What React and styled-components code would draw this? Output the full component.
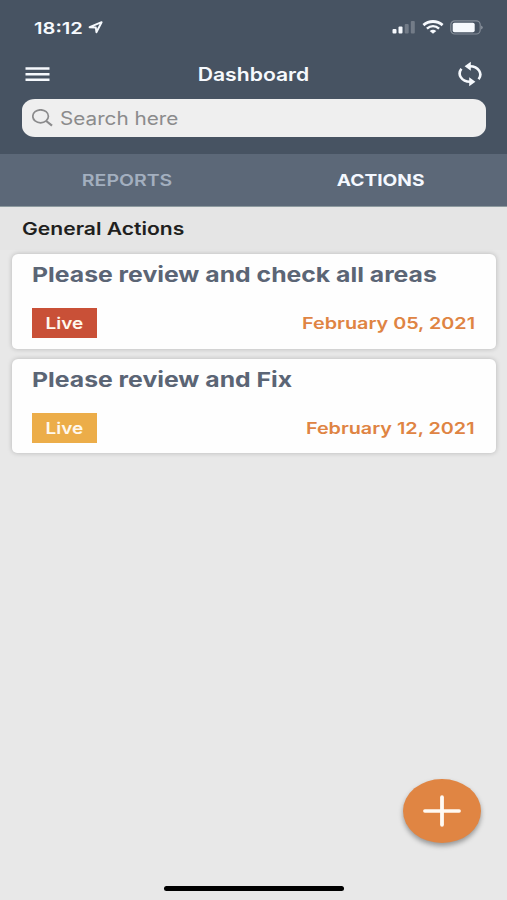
import React, { useState } from "react";
import styled, { createGlobalStyle } from "styled-components";

const GlobalStyle = createGlobalStyle`
  * {
    box-sizing: border-box;
  }
  body {
    margin: 0;
    background: #e8e8e8;
    font-family: Inter, "Liberation Sans", sans-serif;
  }
`;

const Screen = styled.div`
  display: flex;
  flex-direction: column;
  height: 900px;
  overflow: hidden;
  background: #e8e8e8;
  position: relative;
`;

const Header = styled.header`
  height: 154px;
  background: #475362;
  color: #f6f9fd;
`;

const StatusBar = styled.div`
  height: 54px;
  padding: 0 23px 0 34px;
  display: flex;
  align-items: center;
  justify-content: space-between;
`;

const StatusGroup = styled.div`
  display: flex;
  align-items: center;
  gap: ${(props) => props.$gap || "0"};
`;

// the whole interface uses wide letters
const Label = styled.span`
  display: inline-block;
  white-space: pre;
  line-height: 24px;
  transform: scaleX(${(props) => props.$wide || 1.22});
  transform-origin: ${(props) => props.$from || "left"} center;
`;

const Clock = styled(Label)`
  width: 54px;
  padding-top: 1px;
  font-size: 16.5px;
  font-weight: 600;
`;

const NavBar = styled.div`
  height: 40px;
  padding: 0 24px 0 25px;
  display: flex;
  align-items: center;
  justify-content: space-between;
`;

const IconButton = styled.button`
  display: flex;
  padding: 0;
  border: 0;
  background: none;
  color: inherit;
  cursor: pointer;
`;

const Title = styled(Label)`
  padding-top: 2px;
  font-size: 18px;
  font-weight: 600;
`;

const SearchBox = styled.div`
  height: 38px;
  margin: 5px 21px 0 22px;
  padding: 0 10px;
  display: flex;
  align-items: center;
  border-radius: 13px / 11px;
  background: #efefef;
  color: #8b8b8c;
`;

const Placeholder = styled(Label)`
  margin-left: 6px;
  padding-top: 2px;
  font-size: 18px;
`;

const Tabs = styled.nav`
  display: flex;
  height: 53px;
  background: #5c6878;
  border-bottom: 1px solid #8d9a9f;
`;

const Tab = styled.button`
  flex: 1;
  padding: 0;
  border: 0;
  background: none;
  font-family: inherit;
  font-size: 16px;
  font-weight: ${(props) => (props.$active ? 700 : 600)};
  color: ${(props) => (props.$active ? "#f4f8ff" : "#a3afbf")};
  cursor: pointer;
`;

const SectionTitle = styled.div`
  height: 43px;
  padding: 10px 22px 0;
  background: #e5e5e5;
  color: #1f1f20;
  font-size: 17.5px;
  font-weight: 600;
`;

const List = styled.main`
  display: flex;
  flex-direction: column;
  gap: 10px;
  padding: 4px 11px 0 12px;
`;

const Card = styled.article`
  height: 94.5px;
  padding: 9px 20px 0;
  border-radius: 6px 6px 5px 5px;
  background: #fefefe;
  box-shadow: 0 0 5px rgba(0, 0, 0, 0.22);
`;

const CardTitle = styled(Label)`
  display: block;
  width: max-content;
  font-size: 20.5px;
  font-weight: 700;
  color: #5b6575;
`;

const CardFooter = styled.div`
  display: flex;
  align-items: center;
  justify-content: space-between;
  margin-top: 21px;
`;

const Badge = styled.span`
  display: flex;
  align-items: center;
  justify-content: center;
  width: 65px;
  height: 30px;
  background: ${(props) => props.$color};
  color: #fff8ee;
  font-size: 16.5px;
  font-weight: 600;
`;

const DateText = styled(Label)`
  margin-right: 1px;
  font-size: 16px;
  font-weight: 600;
  color: #df8443;
`;

const AddButton = styled.button`
  position: absolute;
  right: 26px;
  bottom: 57.5px;
  width: 78px;
  height: 64px;
  padding: 0;
  border: 0;
  border-radius: 50%;
  display: flex;
  align-items: center;
  justify-content: center;
  background: #e08543;
  box-shadow: 0 3px 5px rgba(0, 0, 0, 0.35);
  cursor: pointer;
`;

const HomeIndicator = styled.div`
  width: 180px;
  height: 5px;
  margin: auto auto 9px 164px;
  border-radius: 3px;
  background: #000;
`;

const LocationIcon = () => (
  <svg width="16" height="13" viewBox="0 0 16 13" fill="none">
    <path
      d="M1.6 6.2L13.6 1.2L8.4 11.2L7.8 6.5Z"
      stroke="currentColor"
      strokeWidth="1.9"
      strokeLinejoin="round"
    />
  </svg>
);

const SignalIcon = () => (
  <svg width="24" height="14" viewBox="0 0 24 14" fill="currentColor">
    <rect x="0.5" y="9" width="4" height="4.5" rx="1" />
    <rect x="6.5" y="6.5" width="4" height="7" rx="1" />
    <rect x="12.7" y="4" width="4" height="9.5" rx="1" opacity="0.25" />
    <rect x="18.8" y="1" width="4" height="12.5" rx="1" opacity="0.25" />
  </svg>
);

const WifiIcon = () => (
  <svg width="22" height="14" viewBox="0 0 22 14" fill="none">
    <path d="M1.4 5.1C7 0.3 15 0.3 20.6 5.1" stroke="currentColor" strokeWidth="2.8" />
    <path d="M4.9 8.6C8.5 5.6 13.5 5.6 17.1 8.6" stroke="currentColor" strokeWidth="2.5" />
    <path d="M7.7 11Q11 8.6 14.3 11L11 13.8Z" fill="currentColor" />
  </svg>
);

const BatteryIcon = () => (
  <svg width="34" height="15" viewBox="0 0 34 15">
    <rect
      x="0.8"
      y="0.8"
      width="29.4"
      height="13.2"
      rx="4"
      fill="none"
      stroke="currentColor"
      strokeOpacity="0.35"
      strokeWidth="1.2"
    />
    <rect x="2.7" y="2.8" width="22" height="9.4" rx="1.8" fill="currentColor" />
    <path d="M31.3 5.5Q34 7.4 31.3 9.4Z" fill="currentColor" opacity="0.5" />
  </svg>
);

const MenuIcon = () => (
  <svg width="25" height="14" viewBox="0 0 25 14" stroke="currentColor" strokeWidth="2.4">
    <path d="M0.5 1.5H24.5M0.5 7.2H24.5M0.5 12.8H24.5" />
  </svg>
);

const SyncIcon = () => (
  <svg width="26" height="26" viewBox="0 0 26 26" fill="none">
    <path
      d="M4.4 7.8C0 13.4 4.6 20.8 13 20.8M21.6 18.2C26 12.6 21.4 5.2 13 5.2"
      stroke="currentColor"
      strokeWidth="2.6"
    />
    <path d="M7.6 5.2L13.8 0.7V9.7ZM18.4 20.8L12.2 16.3V25.3Z" fill="currentColor" />
  </svg>
);

const SearchIcon = () => (
  <svg width="22" height="18" viewBox="0 0 22 18" fill="none" stroke="currentColor">
    <ellipse cx="8.6" cy="7.3" rx="7.8" ry="6.5" strokeWidth="1.7" />
    <path d="M14.2 12L20 16.6" strokeWidth="2.2" />
  </svg>
);

const PlusIcon = () => (
  <svg width="38" height="32" viewBox="0 0 38 32" stroke="#fffaf4" strokeLinecap="round">
    <path d="M1.8 16H36.2" strokeWidth="3.4" />
    <path d="M19 2.2V29.8" strokeWidth="3.8" />
  </svg>
);

const actions = [
  {
    title: "Please review and check all areas",
    date: "February 05, 2021",
    color: "#c95037",
  },
  {
    title: "Please review and Fix",
    date: "February 12, 2021",
    color: "#ecad49",
  },
];

function App() {
  const [tab, setTab] = useState("ACTIONS");

  return (
    <>
      <GlobalStyle />
      <Screen>
        <Header>
          <StatusBar>
            <StatusGroup>
              <Clock>18:12</Clock>
              <LocationIcon />
            </StatusGroup>
            <StatusGroup $gap="6px">
              <SignalIcon />
              <WifiIcon />
              <BatteryIcon />
            </StatusGroup>
          </StatusBar>
          <NavBar>
            <IconButton>
              <MenuIcon />
            </IconButton>
            <Title $from="center" $wide={1.175}>
              Dashboard
            </Title>
            <IconButton>
              <SyncIcon />
            </IconButton>
          </NavBar>
          <SearchBox>
            <SearchIcon />
            <Placeholder $wide={1.15}>Search here</Placeholder>
          </SearchBox>
        </Header>
        <Tabs>
          {["REPORTS", "ACTIONS"].map((name) => (
            <Tab key={name} $active={tab === name} onClick={() => setTab(name)}>
              <Label $from="center" $wide={tab === name ? 1.195 : 1.22}>
                {name}
              </Label>
            </Tab>
          ))}
        </Tabs>
        <SectionTitle>
          <Label $wide={1.205}>General Actions</Label>
        </SectionTitle>
        <List>
          {actions.map((action) => (
            <Card key={action.title}>
              <CardTitle $wide={1.208}>{action.title}</CardTitle>
              <CardFooter>
                <Badge $color={action.color}>
                  <Label $from="center" $wide={1.15}>
                    Live
                  </Label>
                </Badge>
                <DateText $from="right" $wide={1.235}>
                  {action.date}
                </DateText>
              </CardFooter>
            </Card>
          ))}
        </List>
        <HomeIndicator />
        <AddButton>
          <PlusIcon />
        </AddButton>
      </Screen>
    </>
  );
}

export default App;
